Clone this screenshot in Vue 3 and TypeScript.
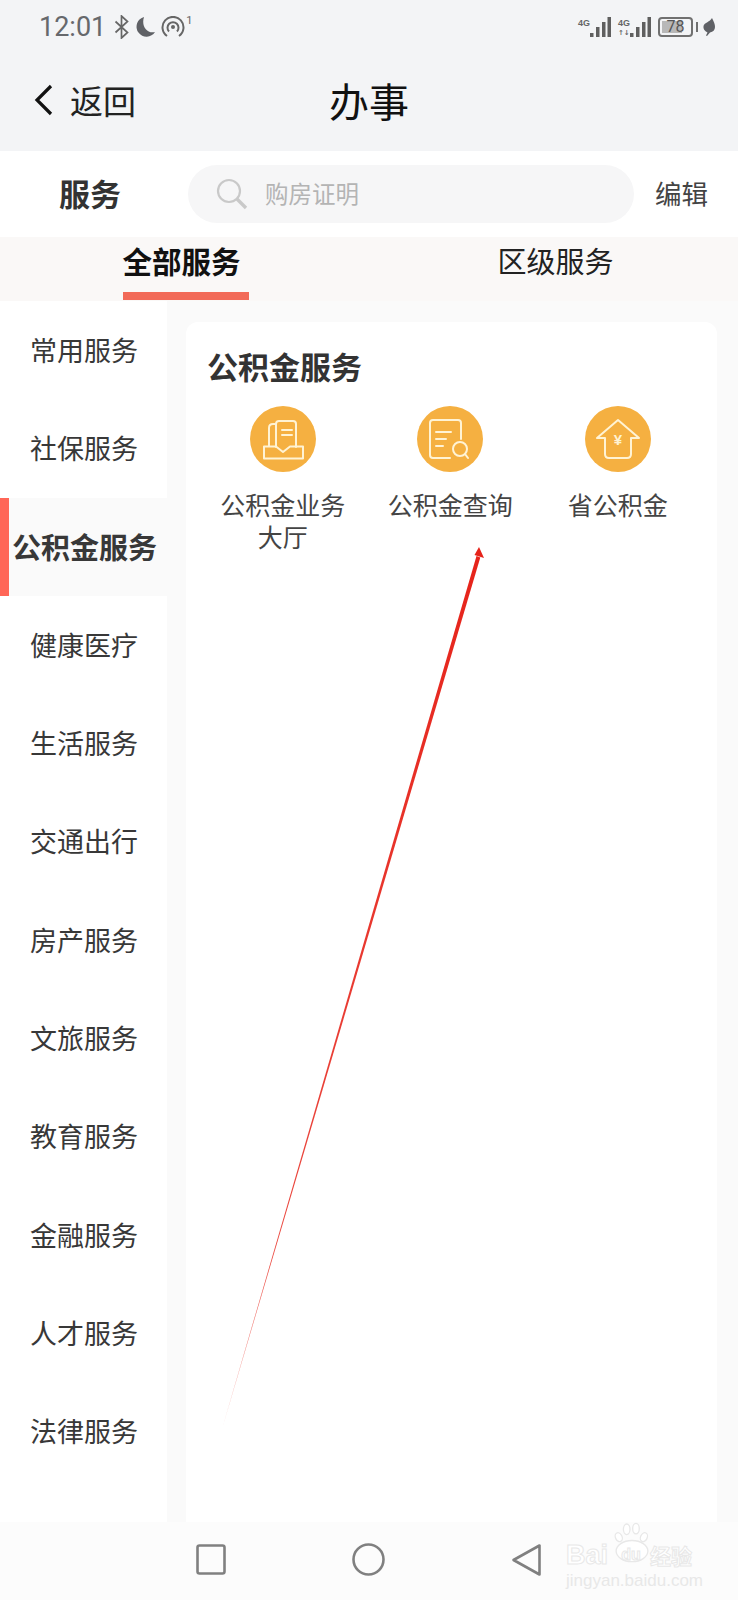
<script setup lang="ts">
interface IService {
  key: string;
  label: string;
}

const menu: string[] = [
  '常用服务', '社保服务', '公积金服务', '健康医疗', '生活服务', '交通出行',
  '房产服务', '文旅服务', '教育服务', '金融服务', '人才服务', '法律服务',
];

const services: IService[] = [
  { key: 'hall', label: '公积金业务大厅' },
  { key: 'query', label: '公积金查询' },
  { key: 'province', label: '省公积金' },
];
</script>

<template>
  <div class="page">
    <header class="head">
      <div class="status">
        <div class="status-left">
          <span class="time">12:01</span>
          <svg class="st-bt" width="15" height="24" viewBox="0 0 15 24">
            <path d="M1.500 6.500l12 11-6 5.500V1l6 5.500-12 11" fill="none" stroke="#666" stroke-width="1.700" />
          </svg>
          <svg width="20" height="20" viewBox="0 0 20 20">
            <path d="M9 0a10 10 0 1 0 11 15C12 17 6 9 9 0z" fill="#5f6166" />
          </svg>
          <svg class="st-hot" width="24" height="22" viewBox="0 0 24 22">
            <g fill="none" stroke="#666" stroke-width="2">
              <path d="M6 20a10.500 10.500 0 1 1 12 0" />
              <path d="M8 15.500a5.500 5.500 0 1 1 8 0" />
            </g>
            <circle cx="12" cy="11" r="2" fill="#666" />
          </svg>
          <sup class="st-one">1</sup>
        </div>
        <div class="status-right">
          <div class="signal">
            <span class="net">4G</span>
            <svg width="21" height="20" viewBox="0 0 21 20">
              <g fill="#5f5f5f">
                <rect x="0" y="16" width="3.500" height="4" />
                <rect x="6" y="10" width="3.500" height="10" />
                <rect x="12" y="5" width="3.500" height="15" />
                <rect x="17.500" y="0" width="3.500" height="20" />
              </g>
            </svg>
          </div>
          <div class="signal">
            <span class="net">4G</span>
            <span class="updown">↑↓</span>
            <svg width="21" height="20" viewBox="0 0 21 20">
              <g fill="#5f5f5f">
                <rect x="0" y="16" width="3.500" height="4" />
                <rect x="6" y="10" width="3.500" height="10" />
                <rect x="12" y="5" width="3.500" height="15" />
                <rect x="17.500" y="0" width="3.500" height="20" />
              </g>
            </svg>
          </div>
          <div class="battery">
            <span class="battery-fill"></span>
            <span class="battery-num">78</span>
          </div>
          <span class="battery-nub"></span>
          <svg width="12" height="18" viewBox="0 0 12 18">
            <path d="M9 0c2 4 3 6 3 9 0 3-2 5-5 5.500L4 18l-1-.5 1.500-3C1.500 13 0 11 .5 8 1.500 4.500 7 4 9 0z" fill="#5f6166" />
          </svg>
        </div>
      </div>
      <div class="nav">
        <div class="back">
          <svg width="20" height="32" viewBox="0 0 20 32">
            <path d="M17 2L3 16l14 14" fill="none" stroke="#111" stroke-width="3.200" />
          </svg>
          <span>返回</span>
        </div>
        <div class="title">办事</div>
        <div></div>
      </div>
    </header>

    <div class="search-row">
      <div class="search-label"><span>服务</span></div>
      <div class="search">
        <svg width="32" height="32" viewBox="0 0 32 32">
          <circle cx="13" cy="13" r="11" fill="none" stroke="#c9c9c9" stroke-width="2.200" />
          <path d="M21 21l9 9" stroke="#c9c9c9" stroke-width="3.400" />
        </svg>
        <span class="hint">购房证明</span>
      </div>
      <div class="edit">编辑</div>
    </div>

    <div class="tabs">
      <div class="tab tab-on">全部服务</div>
      <div class="tab">区级服务</div>
    </div>

    <div class="body">
      <aside class="side">
        <div
          v-for="m in menu"
          :key="m"
          class="side-item"
          :class="{ 'side-on': m === '公积金服务' }"
        >
          {{ m }}
        </div>
      </aside>
      <main class="main">
        <section class="card">
          <h2 class="card-title">公积金服务</h2>
          <div class="grid">
            <div v-for="s in services" :key="s.key" class="svc">
              <svg class="svc-icon" width="66" height="66" viewBox="0 0 66 66">
                <circle cx="33" cy="33" r="33" fill="#f5b041" />
                <g fill="none" stroke="#fff3d4" stroke-width="2" stroke-linejoin="round" stroke-linecap="round">
                  <template v-if="s.key === 'hall'">
                    <path d="M14 40.500H26L33 46l7-5.500h13v12H14z" />
                    <path d="M26 41V18q0-3 3-3h14q3 0 3 3v23" />
                    <path d="M26 18h-3q-4 0-4 4v18" />
                    <path d="M32 24h10M32 29h10" />
                  </template>
                  <template v-else-if="s.key === 'query'">
                    <path d="M33 52H16q-3 0-3-3V17q0-3 3-3h25q3 0 3 3v16" />
                    <path d="M19 26h15M19 33h10M19 40h7" />
                    <circle cx="43" cy="43" r="7" />
                    <path d="M48 48l3 4" />
                  </template>
                  <template v-else>
                    <path d="M33 14L12 32h8v16q0 4 4 4h18q4 0 4-4V32h8z" />
                    <text x="33" y="39" text-anchor="middle" class="yen">¥</text>
                  </template>
                </g>
              </svg>
              <div class="svc-label">{{ s.label }}</div>
            </div>
          </div>
        </section>
      </main>
    </div>

    <footer class="bar">
      <svg width="30" height="31" viewBox="0 0 30 31">
        <rect x="1.500" y="1.500" width="27" height="28" rx="2" fill="none" stroke="#808080" stroke-width="2.600" />
      </svg>
      <svg width="33" height="33" viewBox="0 0 33 33">
        <ellipse cx="16.500" cy="16.500" rx="15" ry="15" fill="none" stroke="#808080" stroke-width="2.600" />
      </svg>
      <svg width="31" height="34" viewBox="0 0 31 34">
        <path d="M28.500 2.500v29L2.500 17z" fill="none" stroke="#808080" stroke-width="2.600" stroke-linejoin="round" />
      </svg>
    </footer>

    <!-- annotation drawn on top of the screenshot -->
    <svg class="arrow" width="738" height="1600" viewBox="0 0 738 1600">
      <defs>
        <linearGradient id="fade" x1="0" y1="1" x2="0" y2="0">
          <stop offset="0" stop-color="#e8342a" stop-opacity="0.45" />
          <stop offset="0.2" stop-color="#e8342a" stop-opacity="0.9" />
          <stop offset="1" stop-color="#e6231a" />
        </linearGradient>
      </defs>
      <path d="M222 1429L476.500 556l3.800 1.500z" fill="url(#fade)" />
      <path d="M479 547l5 11-9.500-3z" fill="#e6231a" />
    </svg>

    <div class="mark">
      <svg class="mark-paw" width="40" height="41" viewBox="0 0 60 62">
        <g fill="#fff" stroke="#e8e8e8" stroke-width="2">
          <ellipse cx="22" cy="11" rx="5" ry="8" />
          <ellipse cx="36" cy="10" rx="5" ry="8" />
          <ellipse cx="10" cy="23" rx="5" ry="7" transform="rotate(-25 10 23)" />
          <ellipse cx="48" cy="23" rx="5" ry="7" transform="rotate(25 48 23)" />
          <ellipse cx="30" cy="44" rx="24" ry="16" />
        </g>
      </svg>
      <div class="mark-top">
        <span class="mark-bai">Bai</span>
        <span class="mark-du">du</span>
        <span class="mark-cn">经验</span>
      </div>
      <div class="mark-url">jingyan.baidu.com</div>
    </div>
  </div>
</template>

<style scoped>
.page {
  position: relative;
  display: flex;
  flex-direction: column;
  width: 738px;
  height: 1600px;
  overflow: hidden;
  background: #fff;
  font-family: "Noto Sans CJK SC", "Noto Sans", sans-serif;
  color: #333;
}
.head {
  height: 151px;
  flex: none;
  background: #f3f4f6;
}
.status {
  display: flex;
  justify-content: space-between;
  align-items: center;
  height: 50px;
  padding: 4px 23px 0 39px;
  box-sizing: border-box;
}
.status-left,
.status-right {
  display: flex;
  align-items: center;
}
.time {
  font-family: Roboto, sans-serif;
  font-size: 27px;
  color: #66686c;
}
.st-bt {
  margin: 0 6px 0 8px;
}
.st-hot {
  margin-left: 6px;
}
.st-one {
  align-self: flex-start;
  margin: 4px 0 0 1px;
  font-family: Roboto, sans-serif;
  font-size: 11px;
  line-height: 11px;
  color: #666;
}
.signal {
  position: relative;
  display: flex;
  align-items: flex-end;
  margin-right: 7px;
}
.net {
  width: 12px;
  height: 20px;
  font-family: "Liberation Sans", sans-serif;
  font-size: 9px;
  font-weight: 700;
  line-height: 12px;
  color: #666;
  white-space: nowrap;
}
.updown {
  position: absolute;
  left: 0;
  bottom: 0;
  font-family: "DejaVu Sans", sans-serif;
  font-size: 7px;
  font-weight: 700;
  line-height: 8px;
  color: #666;
}
.battery {
  position: relative;
  width: 35px;
  height: 20px;
  box-sizing: border-box;
  border: 2px solid #707070;
  border-radius: 4px;
}
.battery-fill {
  position: absolute;
  left: 2px;
  top: 2px;
  bottom: 2px;
  width: 20px;
  background: #b8b8b8;
}
.battery-num {
  position: absolute;
  left: 0;
  right: 0;
  top: 0;
  font-family: Roboto, sans-serif;
  font-size: 16px;
  line-height: 16px;
  text-align: center;
  color: #555;
}
.battery-nub {
  width: 2px;
  height: 10px;
  margin: 0 5px 0 3px;
  background: #707070;
}
.nav {
  display: grid;
  grid-template-columns: 1fr auto 1fr;
  align-items: center;
  height: 101px;
  padding-bottom: 2px;
  box-sizing: border-box;
}
.back {
  display: flex;
  align-items: center;
  gap: 16px;
  padding-left: 34px;
  font-size: 33px;
  color: #222;
}
.title {
  font-size: 40px;
  color: #111;
}
.search-row {
  display: flex;
  align-items: center;
  height: 86px;
  flex: none;
}
.search-label {
  width: 188px;
  padding: 0 0 4px 59px;
  box-sizing: border-box;
  font-size: 31px;
  font-weight: 700;
}
.search {
  display: flex;
  align-items: center;
  gap: 17px;
  width: 446px;
  height: 58px;
  padding-left: 28px;
  box-sizing: border-box;
  border-radius: 29px;
  background: #f6f6f7;
  font-size: 23.500px;
  color: #b4b4b4;
}
.hint {
  padding-bottom: 3px;
}
.edit {
  margin-left: 21px;
  padding-bottom: 4px;
  font-size: 26.500px;
  color: #444;
}
.tabs {
  display: grid;
  grid-template-columns: 1fr 1fr;
  height: 64px;
  flex: none;
  background: #faf8f7;
}
.tab {
  position: relative;
  padding-left: 4px;
  font-size: 29px;
  line-height: 46px;
  text-align: center;
  color: #222;
}
.tab-on {
  padding: 0 6px 0 0;
  font-size: 29.500px;
  font-weight: 700;
  color: #111;
}
.tab-on::after {
  content: "";
  position: absolute;
  left: 123px;
  top: 55px;
  width: 126px;
  height: 8px;
  background: #f26a58;
}
.body {
  display: flex;
  flex: 1;
  min-height: 0;
}
.side {
  flex: none;
  width: 167px;
  background: #fff;
}
.side-item {
  height: 98.300px;
  padding-left: 1px;
  box-sizing: border-box;
  font-size: 27px;
  line-height: 98.300px;
  text-align: center;
  color: #383838;
  white-space: nowrap;
}
.side-on {
  padding-left: 3px;
  border-left: 9px solid #ff6657;
  line-height: 96px;
  text-align: left;
  background: #fafafa;
  font-size: 29px;
  font-weight: 700;
}
.main {
  flex: 1;
  padding: 21px 21px 0 19px;
  background: #fafafa;
}
.card {
  height: 100%;
  padding: 22px 15px 0 13px;
  box-sizing: border-box;
  border-radius: 12px 12px 0 0;
  background: #fff;
}
.card-title {
  margin: 0 0 0 8px;
  font-size: 31px;
  font-weight: 700;
  line-height: 44px;
  color: #333;
}
.grid {
  display: grid;
  grid-template-columns: repeat(3, 167.500px);
  margin-top: 18px;
}
.svc {
  display: flex;
  flex-direction: column;
  align-items: center;
}
.svc-icon {
  display: block;
}
.svc-label {
  width: 130px;
  margin-top: 16px;
  font-size: 25px;
  line-height: 32px;
  text-align: center;
  color: #444;
}
.yen {
  fill: #fff3d4;
  stroke: none;
  font-family: "Liberation Sans", sans-serif;
  font-size: 15px;
  font-weight: 700;
}
.bar {
  display: flex;
  justify-content: space-between;
  align-items: center;
  height: 78px;
  flex: none;
  box-sizing: border-box;
  padding: 0 196px 3px 196px;
  background: #fcfcfc;
}
.arrow {
  position: absolute;
  left: 0;
  top: 0;
  pointer-events: none;
}
.mark {
  position: absolute;
  left: 566px;
  top: 1520px;
  width: 136px;
  height: 72px;
  color: #fff;
  font-family: "Liberation Sans", sans-serif;
  -webkit-text-stroke: 1px #e8e8e8;
}
.mark-paw {
  position: absolute;
  left: 46px;
  top: 2px;
}
.mark-top {
  position: relative;
  display: flex;
  align-items: center;
  height: 24px;
  margin-top: 23px;
  font-size: 27px;
  font-weight: 700;
}
.mark-bai {
  width: 46px;
}
.mark-du {
  width: 38px;
  font-size: 16px;
  text-align: center;
}
.mark-cn {
  font-family: "Noto Sans CJK SC", sans-serif;
  font-size: 21px;
}
.mark-url {
  position: relative;
  margin-top: 4px;
  font-size: 17px;
  line-height: 20px;
  color: #e8e8e8;
  white-space: nowrap;
  -webkit-text-stroke: 0;
}
</style>
